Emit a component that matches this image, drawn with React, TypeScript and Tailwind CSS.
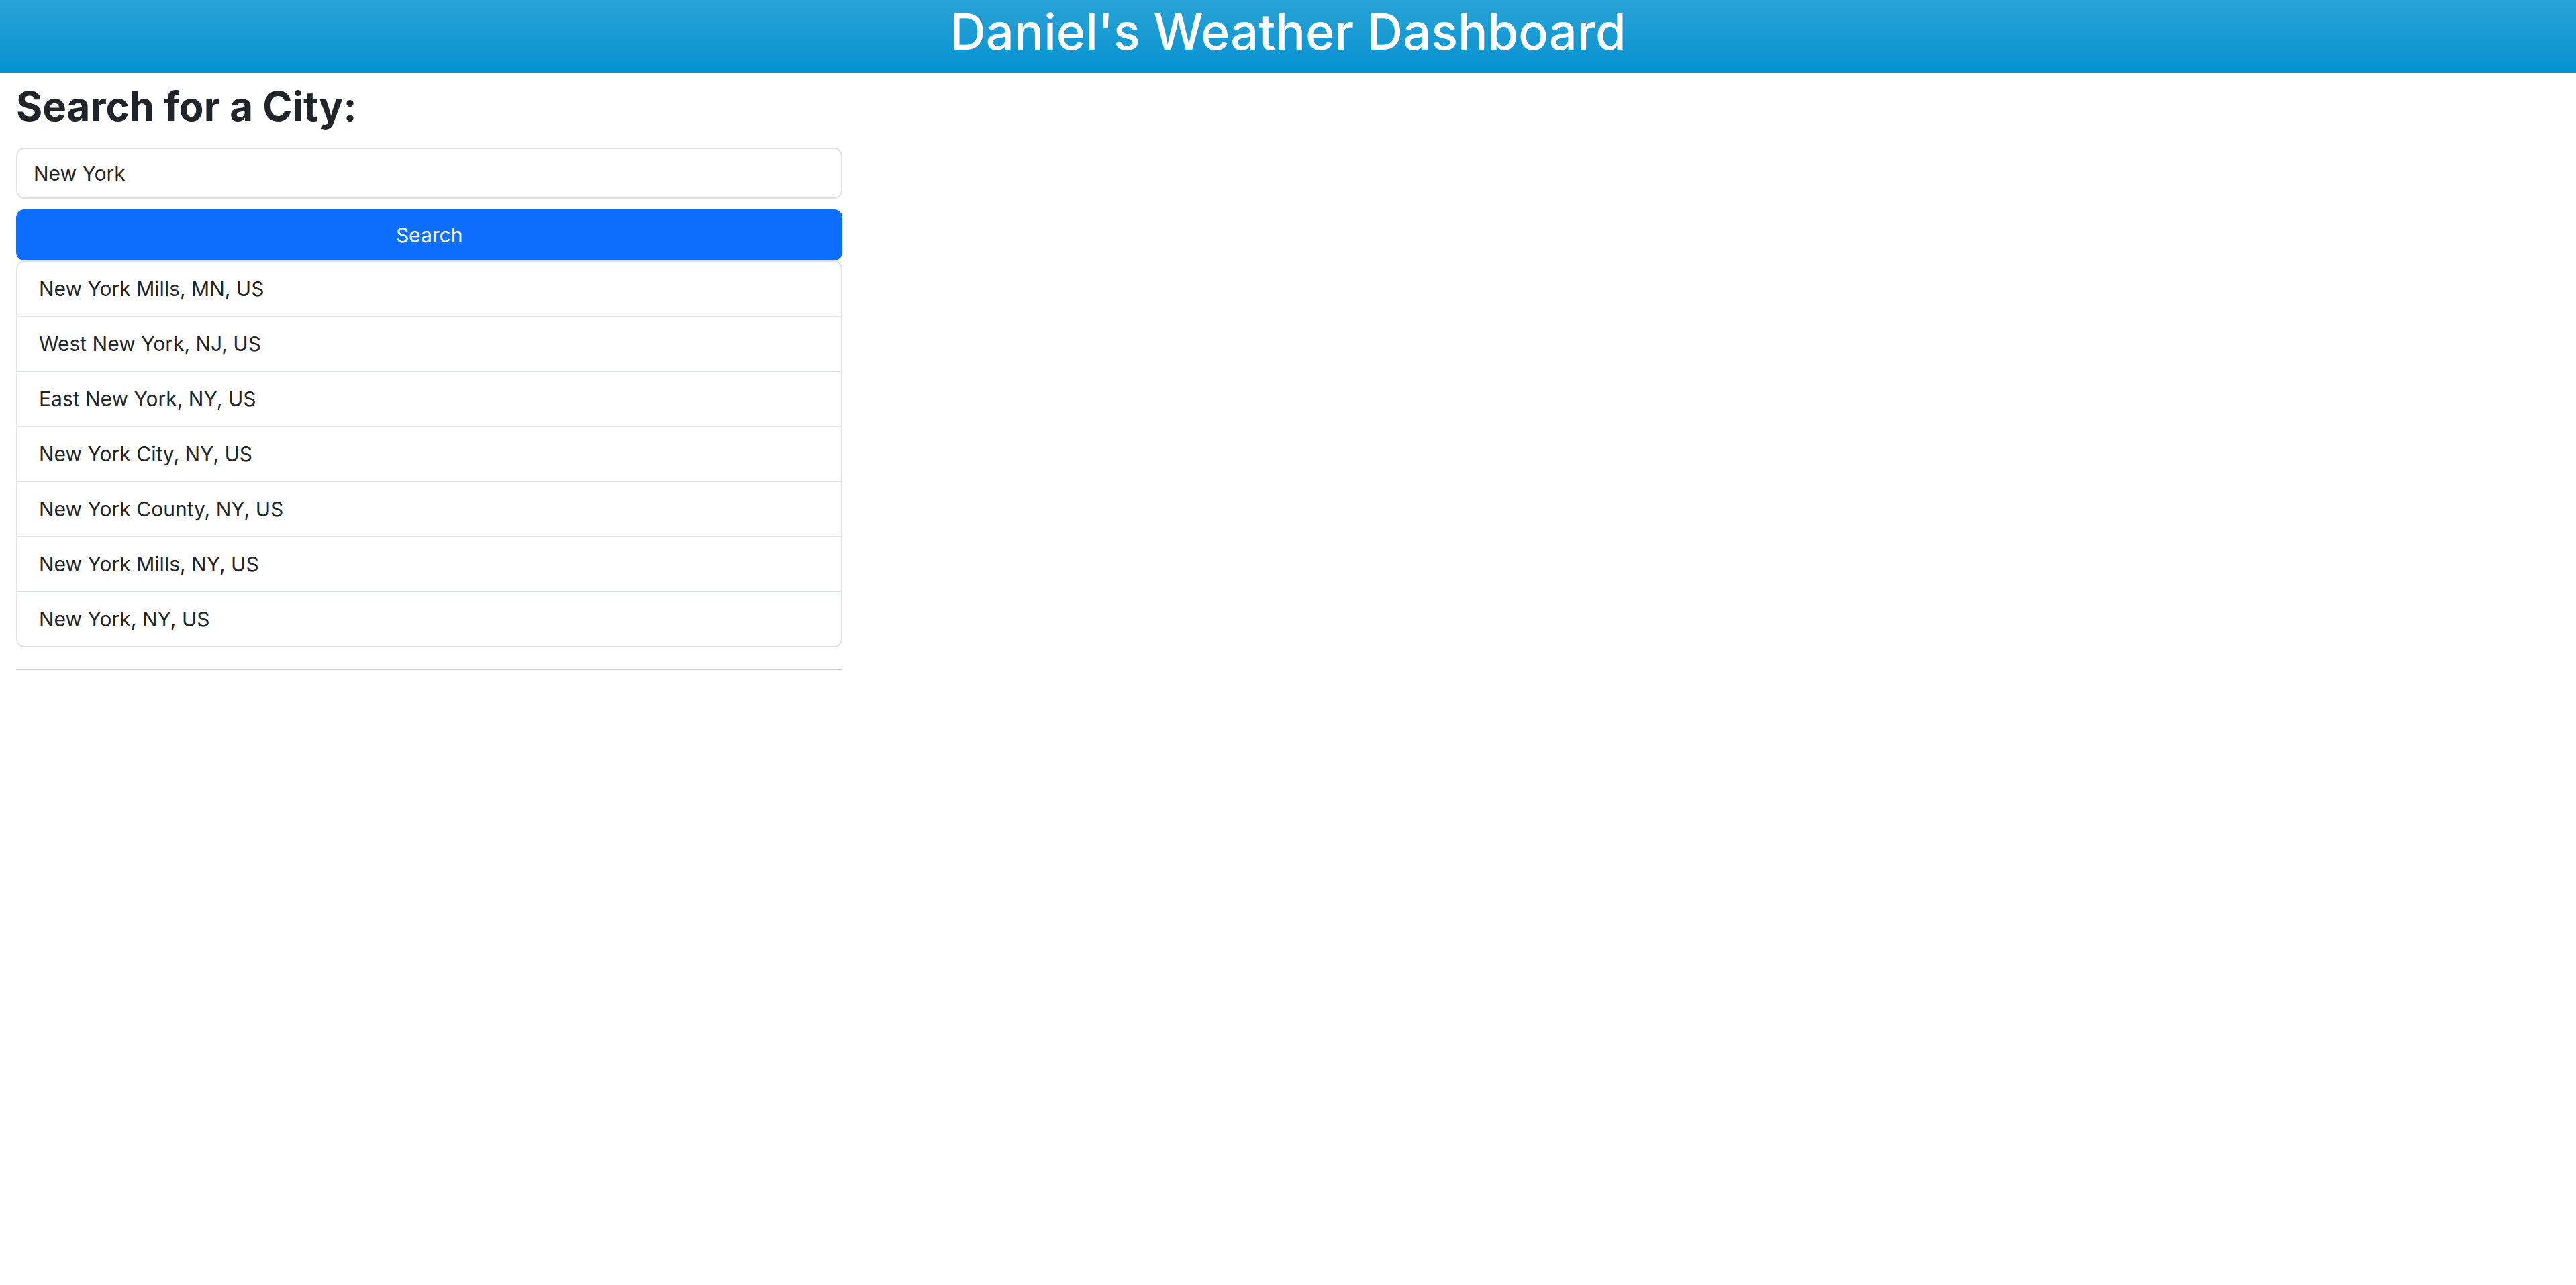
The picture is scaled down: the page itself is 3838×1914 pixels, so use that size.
import { useState } from "react";

const cities = [
  "New York Mills, MN, US",
  "West New York, NJ, US",
  "East New York, NY, US",
  "New York City, NY, US",
  "New York County, NY, US",
  "New York Mills, NY, US",
  "New York, NY, US",
];

export default function App() {
  const [query, setQuery] = useState("New York");

  return (
    <div className="min-h-screen bg-white font-['Inter',sans-serif] text-[30px] leading-[48px] text-[#212529]">
      <header className="bg-linear-to-b from-[#28a3d7] to-[#0092d0] pb-3.5 text-center text-white">
        <h1 className="text-[74px] leading-[94px] font-medium">Daniel's Weather Dashboard</h1>
      </header>
      <main className="w-1/3 px-6 pt-2">
        <form onSubmit={(e) => e.preventDefault()}>
          <label htmlFor="city" className="mb-5 block text-[60px] leading-[84px] font-bold">
            Search for a City:
          </label>
          <input
            id="city"
            type="text"
            value={query}
            onChange={(e) => setQuery(e.target.value)}
            className="block h-[76px] w-full rounded-xl border-2 border-[#dee2e6] bg-white px-6 outline-none"
          />
          <button
            type="submit"
            className="mt-4 block h-[76px] w-full rounded-xl bg-[#0d6efd] px-6 text-white"
          >
            Search
          </button>
        </form>
        <ul className="divide-y-2 divide-[#dee2e6] rounded-xl border-2 border-[#dee2e6]">
          {cities.map((city) => (
            <li key={city}>
              <button type="button" className="block w-full px-8 py-4 text-left">
                {city}
              </button>
            </li>
          ))}
        </ul>
        <hr className="my-8 border-t-2 border-[#c7c8c9]" />
      </main>
    </div>
  );
}
